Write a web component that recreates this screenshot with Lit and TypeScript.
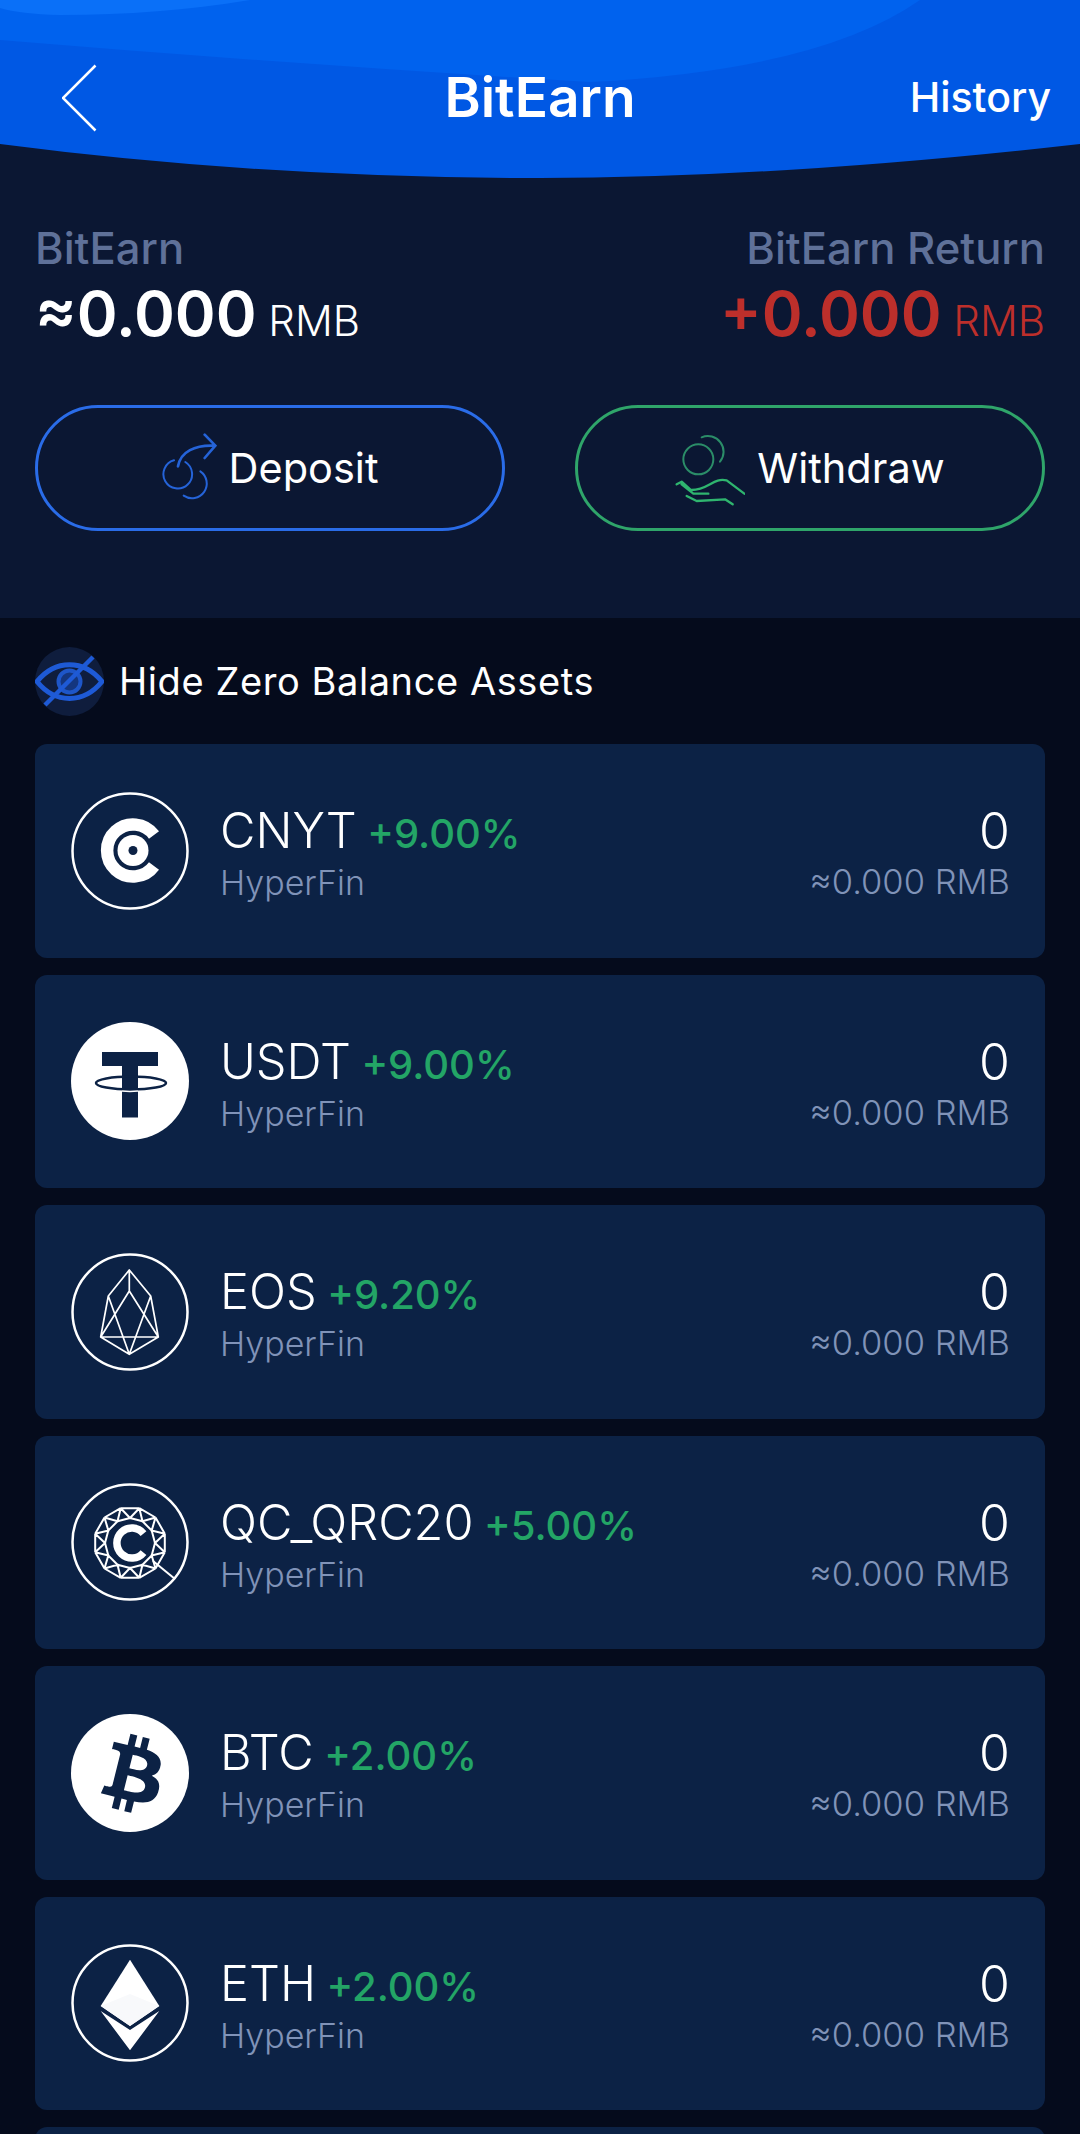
import { LitElement, html, css, svg } from 'lit';
import { customElement } from 'lit/decorators.js';

const NAVY = '#0c2245';

const cnytIcon = svg`
  <circle cx="59" cy="59" r="57.5" fill="none" stroke="#fff" stroke-width="2.5"/>
  <path d="M83 43 A26 26 0 1 0 83 74" fill="none" stroke="#fff" stroke-width="12.5"/>
  <circle cx="62" cy="58.5" r="15.5" fill="#fff"/>
  <circle cx="62" cy="58.5" r="4.5" fill="${NAVY}"/>`;

const usdtIcon = svg`
  <circle cx="59" cy="59" r="59" fill="#fff"/>
  <path d="M31 30h56v14H67v51.500H51V44H31z" fill="${NAVY}"/>
  <ellipse cx="60" cy="61" rx="35" ry="6.500" fill="none" stroke="${NAVY}" stroke-width="2.500"/>
  <path d="M51 69q8 .8 16 0" fill="none" stroke="#fff" stroke-width="1.500"/>`;

const eosIcon = svg`
  <circle cx="59" cy="59" r="57.500" fill="none" stroke="#fff" stroke-width="2.500"/>
  <path d="M58.300 17 37.300 43 29.700 84 58.300 101.300 87.300 84 79.700 43zM58.300 17V38M37.300 43 58.300 101.300 79.700 43M29.700 84 58.300 38 87.300 84M29.700 84H87.300"
    fill="none" stroke="#fff" stroke-width="1.700" stroke-linejoin="round"/>`;

// gem facets for the QC coin
const gemPoint = (r: number, deg: number) => {
  const a = (deg * Math.PI) / 180;
  return `${(59 + r * Math.cos(a)).toFixed(1)} ${(60 + r * Math.sin(a)).toFixed(1)}`;
};
const gemPath = () => {
  let d = '';
  for (let i = 0; i < 12; i++) {
    const deg = i * 30 + 15;
    d += `M${gemPoint(36, deg)}L${gemPoint(36, deg + 30)}`;
    d += `M${gemPoint(36, deg)}L${gemPoint(25, deg + 15)}L${gemPoint(36, deg + 30)}`;
    d += `M${gemPoint(25, deg + 15)}L${gemPoint(25, deg + 45)}`;
  }
  return d;
};
const qcIcon = svg`
  <circle cx="59" cy="59" r="57.500" fill="none" stroke="#fff" stroke-width="2.500"/>
  <path d="${gemPath()}" fill="none" stroke="#fff" stroke-width="2"/>
  <path d="M82 78 104 96" stroke="#fff" stroke-width="2"/>
  <circle cx="59" cy="60" r="21" fill="${NAVY}"/>
  <path d="M72.500 50.500A15 15 0 1 0 72.500 69.500" fill="none" stroke="#fff" stroke-width="7.500"/>`;

const btcIcon = svg`
  <circle cx="59" cy="59" r="59" fill="#fff"/>
  <g transform="translate(-0.300 -1.900) scale(5.200)">
    <path fill="${NAVY}" fill-rule="evenodd" d="M17.288 10.291c.24-1.59-.974-2.45-2.64-3.03l.54-2.153-1.315-.33-.525 2.107c-.345-.087-.705-.167-1.064-.25l.526-2.127-1.32-.33-.54 2.165c-.285-.067-.565-.132-.84-.2l-1.815-.45-.35 1.407s.975.225.955.236c.535.136.63.486.615.766l-1.477 5.92c-.075.166-.24.406-.614.314.015.02-.96-.24-.96-.24l-.66 1.51 1.71.426.93.242-.54 2.19 1.32.327.54-2.17c.36.1.705.19 1.05.273l-.51 2.154 1.32.33.545-2.19c2.24.427 3.93.257 4.64-1.774.57-1.637-.03-2.58-1.217-3.196.854-.193 1.5-.76 1.68-1.93h.01zM14.278 14.511c-.404 1.64-3.157.75-4.05.53l.72-2.9c.896.23 3.757.67 3.33 2.37zM14.688 10.271c-.37 1.49-2.662.735-3.405.55l.654-2.64c.744.186 3.137.53 2.75 2.084v.006z"/>
  </g>`;

const ethIcon = svg`
  <circle cx="59" cy="59" r="57.500" fill="none" stroke="#fff" stroke-width="2.500"/>
  <path d="M59 15.700 88.300 62 59 82 29.700 62z" fill="#fff"/>
  <path d="M29.700 62 59 50 88.300 62 59 82z" fill="#f8f9fb"/>
  <path d="M29.700 67 59 86 88.300 67 59 106.300z" fill="#fff"/>`;

const coins = [
  { name: 'CNYT', rate: '+9.00%', icon: cnytIcon },
  { name: 'USDT', rate: '+9.00%', icon: usdtIcon },
  { name: 'EOS', rate: '+9.20%', icon: eosIcon },
  { name: 'QC_QRC20', rate: '+5.00%', icon: qcIcon },
  { name: 'BTC', rate: '+2.00%', icon: btcIcon },
  { name: 'ETH', rate: '+2.00%', icon: ethIcon },
];

@customElement('app-root')
export class AppRoot extends LitElement {
  static styles = css`
:host {
  display: block;
  height: 2134px;
  overflow: hidden;
  background: #0b1733;
  color: #fff;
  font-family: Inter, "Liberation Sans", sans-serif;
}

.header {
  position: relative;
  height: 178px;
  box-sizing: border-box;
  padding: 61px 29px 0 29px;
}

.header-bg {
  position: absolute;
  top: 0;
  left: 0;
}

.nav {
  position: relative;
  display: grid;
  grid-template-columns: 1fr auto 1fr;
  align-items: center;
  height: 66px;
}

.back {
  display: block;
  margin: 3px 0 0 33px;
}

.title {
  font-size: 55px;
  font-weight: 600;
}

.history {
  justify-self: end;
  font-size: 41px;
  font-weight: 500;
}

.summary {
  height: 440px;
  box-sizing: border-box;
  padding: 47px 35px 0;
}

.totals {
  display: flex;
  justify-content: space-between;
}

.total-right {
  text-align: right;
}

.label {
  font-size: 43.600px;
  font-weight: 500;
  line-height: 48px;
  color: #5f7199;
}

.amount {
  font-size: 62px;
  font-weight: 600;
  line-height: 78px;
  margin-top: 2px;
}

.unit {
  font-size: 42px;
  font-weight: 300;
  margin-left: -4px;
}

.amount-red {
  color: #bd2f2b;
}

.actions {
  display: flex;
  justify-content: space-between;
  margin-top: 45px;
}

.btn {
  width: 470px;
  height: 126px;
  box-sizing: border-box;
  border: 3px solid;
  border-radius: 63px;
  display: flex;
  align-items: center;
  justify-content: center;
  gap: 12px;
  font-size: 41.500px;
}

.btn-blue {
  border-color: #2a6ce8;
}

.btn-green {
  border-color: #2fa56a;
}

.assets {
  background: #050b1c;
  padding: 0 35px;
}

.toggle {
  height: 126px;
  display: flex;
  align-items: center;
  gap: 15px;
  font-size: 38px;
  letter-spacing: 0.58px;
}

.eye {
  display: block;
}

.cards {
  display: flex;
  flex-direction: column;
  gap: 17px;
}

.card {
  height: 213.500px;
  flex: none;
  box-sizing: border-box;
  background: #0c2245;
  border-radius: 12px;
  padding: 0 35px 0 36px;
  display: flex;
  align-items: center;
  gap: 31px;
}

.coin {
  flex: none;
  display: block;
}

.info {
  flex: 1;
  padding-top: 7px;
}

.top-line {
  display: flex;
  align-items: baseline;
  gap: 10.500px;
  line-height: 55px;
}

.name {
  font-size: 48.700px;
  font-weight: 300;
}

.rate {
  font-size: 40px;
  font-weight: 500;
  color: #23a566;
}

.sub {
  font-size: 34px;
  font-weight: 300;
  line-height: 44px;
  color: #8093b8;
}

.right {
  text-align: right;
  padding-top: 7px;
}

.right .sub {
  font-size: 34.500px;
  margin-top: 1px;
}

.balance {
  font-size: 50px;
  font-weight: 300;
  line-height: 55px;
}
  `;

  renderCard(c: (typeof coins)[number]) {
    return html`
      <div class="card">
        <svg class="coin" width="118" height="118" viewBox="0 0 118 118">${c.icon}</svg>
        <div class="info">
          <div class="top-line"><span class="name">${c.name}</span><span class="rate">${c.rate}</span></div>
          <div class="sub">HyperFin</div>
        </div>
        <div class="right">
          <div class="balance">0</div>
          <div class="sub">≈0.000 RMB</div>
        </div>
      </div>
    `;
  }

  render() {
    return html`
      <div class="header">
        <svg class="header-bg" width="1080" height="178" viewBox="0 0 1080 178">
          <path d="M0 0H1080V144Q780 178 540 178 260 178 0 144z" fill="#0058e4"/>
          <path d="M0 40Q300 65 590 82 820 70 920 0H0z" fill="#0062ee"/>
          <path d="M0 0H250Q160 15 60 15 20 14 0 8z" fill="#0a70f8"/>
        </svg>
        <div class="nav">
          <svg class="back" width="36" height="68" viewBox="0 0 36 68">
            <path d="M33.500 1.500 1 34 33.500 66.500" fill="none" stroke="#fff" stroke-width="2.500"/>
          </svg>
          <div class="title">BitEarn</div>
          <div class="history">History</div>
        </div>
      </div>

      <div class="summary">
        <div class="totals">
          <div>
            <div class="label">BitEarn</div>
            <div class="amount">≈0.000 <span class="unit">RMB</span></div>
          </div>
          <div class="total-right">
            <div class="label">BitEarn Return</div>
            <div class="amount amount-red">+0.000 <span class="unit">RMB</span></div>
          </div>
        </div>
        <div class="actions">
          <div class="btn btn-blue">
            <svg width="55" height="70" viewBox="90 40 165 210" fill="none" stroke="#2563d8" stroke-width="6" stroke-linecap="round">
              <path d="M126 122A43 43 0 1 0 160 127"/>
              <path d="M205 155A42 42 0 1 1 155 228"/>
              <path d="M138 140C146 95 190 76 245 78M218 45 250 78 218 115" stroke-width="8"/>
            </svg>
            Deposit
          </div>
          <div class="btn btn-green">
            <svg width="70" height="75" viewBox="40 30 210 225" fill="none" stroke-width="6" stroke-linecap="round" stroke-linejoin="round">
              <circle cx="110" cy="115" r="45" stroke="#2b8d68"/>
              <path d="M120 49A47 47 0 0 1 175 122" stroke="#2b8d68"/>
              <path d="M45 190 60 182 88 207C140 208 155 168 195 178L248 218M60 190 95 218H140M75 225 105 240 190 235 213 250" stroke="#2fb56f" stroke-width="7"/>
            </svg>
            Withdraw
          </div>
        </div>
      </div>

      <div class="assets">
        <div class="toggle">
          <svg class="eye" width="69" height="69" viewBox="0 0 69 69">
            <circle cx="34.500" cy="34.500" r="34.500" fill="#0f1d3d"/>
            <path d="M2 34.500C20 12 49 12 67 34.500 49 57 20 57 2 34.500z" fill="none" stroke="#1e5ad6" stroke-width="5"/>
            <circle cx="34.500" cy="34.500" r="11" fill="#14367f" stroke="#1e56c8" stroke-width="4"/>
            <path d="M58 10 10 58" stroke="#1e5ad6" stroke-width="4.500"/>
          </svg>
          Hide Zero Balance Assets
        </div>
        <div class="cards">
          ${coins.map((c) => this.renderCard(c))}
          <div class="card"></div>
        </div>
      </div>
    `;
  }
}

declare global {
  interface HTMLElementTagNameMap {
    'app-root': AppRoot;
  }
}
